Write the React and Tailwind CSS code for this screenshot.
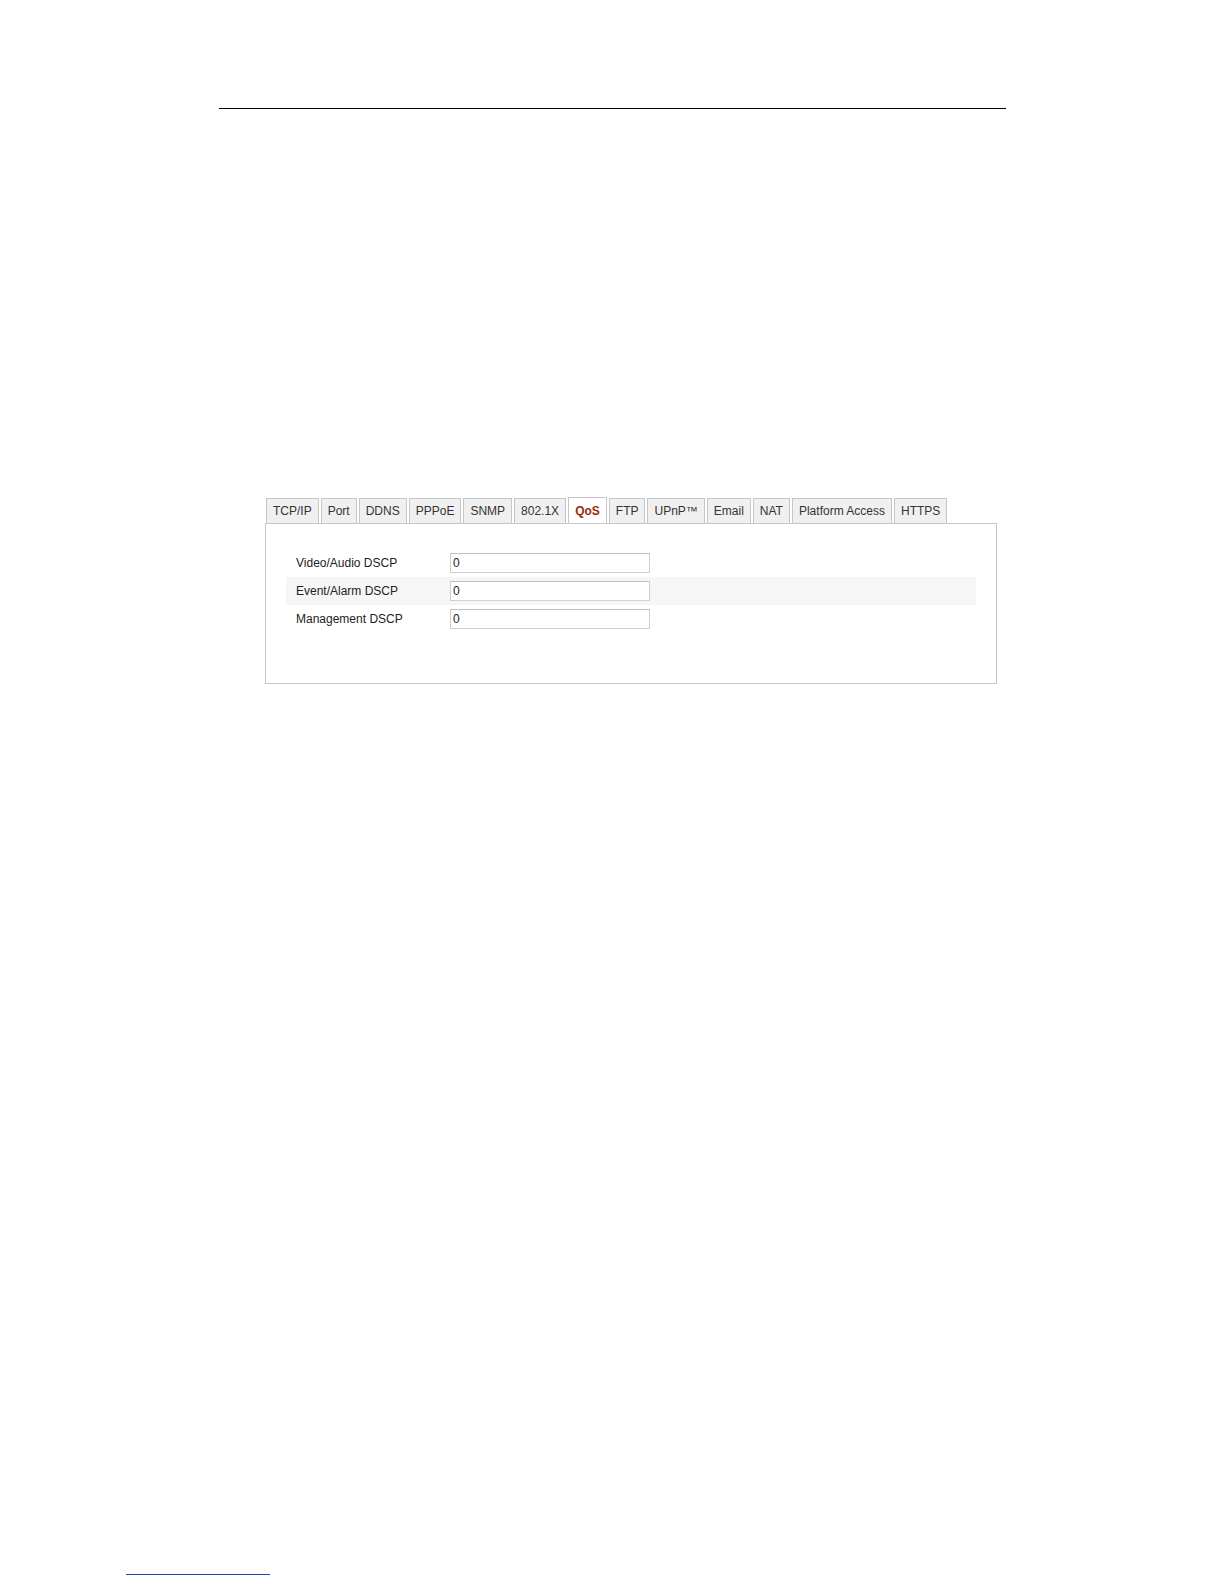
import React from "react";

const tabs = [
  "TCP/IP",
  "Port",
  "DDNS",
  "PPPoE",
  "SNMP",
  "802.1X",
  "QoS",
  "FTP",
  "UPnP™",
  "Email",
  "NAT",
  "Platform Access",
  "HTTPS",
];

const rows = [
  { label: "Video/Audio DSCP", value: "0" },
  { label: "Event/Alarm DSCP", value: "0", shaded: true },
  { label: "Management DSCP", value: "0" },
];

const App = () => {
  return (
    <div
      className="w-[1224px] h-[1584px] bg-white flex flex-col"
      style={{ fontFamily: '"Liberation Sans", Arial, sans-serif' }}
    >
      {/* PAGE HEADER RULE */}
      <div className="mt-[108px] ml-[219px] w-[787px] border-t border-black" />

      {/* QOS SETTINGS PANEL */}
      <div className="mt-[388px] ml-[265px] w-[732px]">
        <div className="flex gap-[2px] pl-px">
          {tabs.map((tab) =>
            tab === "QoS" ? (
              <div
                key={tab}
                className="h-[26px] -mb-px px-[6px] flex items-center bg-white border border-b-0 border-[#c6c6c6] text-[12px] font-bold text-[#9c2a0a] z-10"
              >
                {tab}
              </div>
            ) : (
              <div
                key={tab}
                className="h-[25px] mt-px px-[6px] flex items-center bg-[#f0f0f0] border border-b-0 border-[#c6c6c6] text-[12px] text-[#333333]"
              >
                {tab}
              </div>
            )
          )}
        </div>
        <div className="border border-[#c6c6c6] h-[161px] px-[20px] pt-[25px]">
          {rows.map((row) => (
            <div
              key={row.label}
              className={`h-[28px] flex items-center pl-[10px] ${
                row.shaded ? "bg-[#f6f6f6]" : ""
              }`}
            >
              <div className="w-[154px] text-[12px] text-[#222222]">{row.label}</div>
              <div className="w-[200px] h-[20px] border border-[#cfcfcf] border-t-[#bdbdbd] bg-white flex items-center px-[2px] text-[12px] text-[#1a1a2e]">
                {row.value}
              </div>
            </div>
          ))}
        </div>
      </div>

      {/* FOOTNOTE RULE */}
      <div className="mt-[890px] ml-[126px] w-[144px] border-t border-[#2040b0]" />
    </div>
  );
};

export default App;
